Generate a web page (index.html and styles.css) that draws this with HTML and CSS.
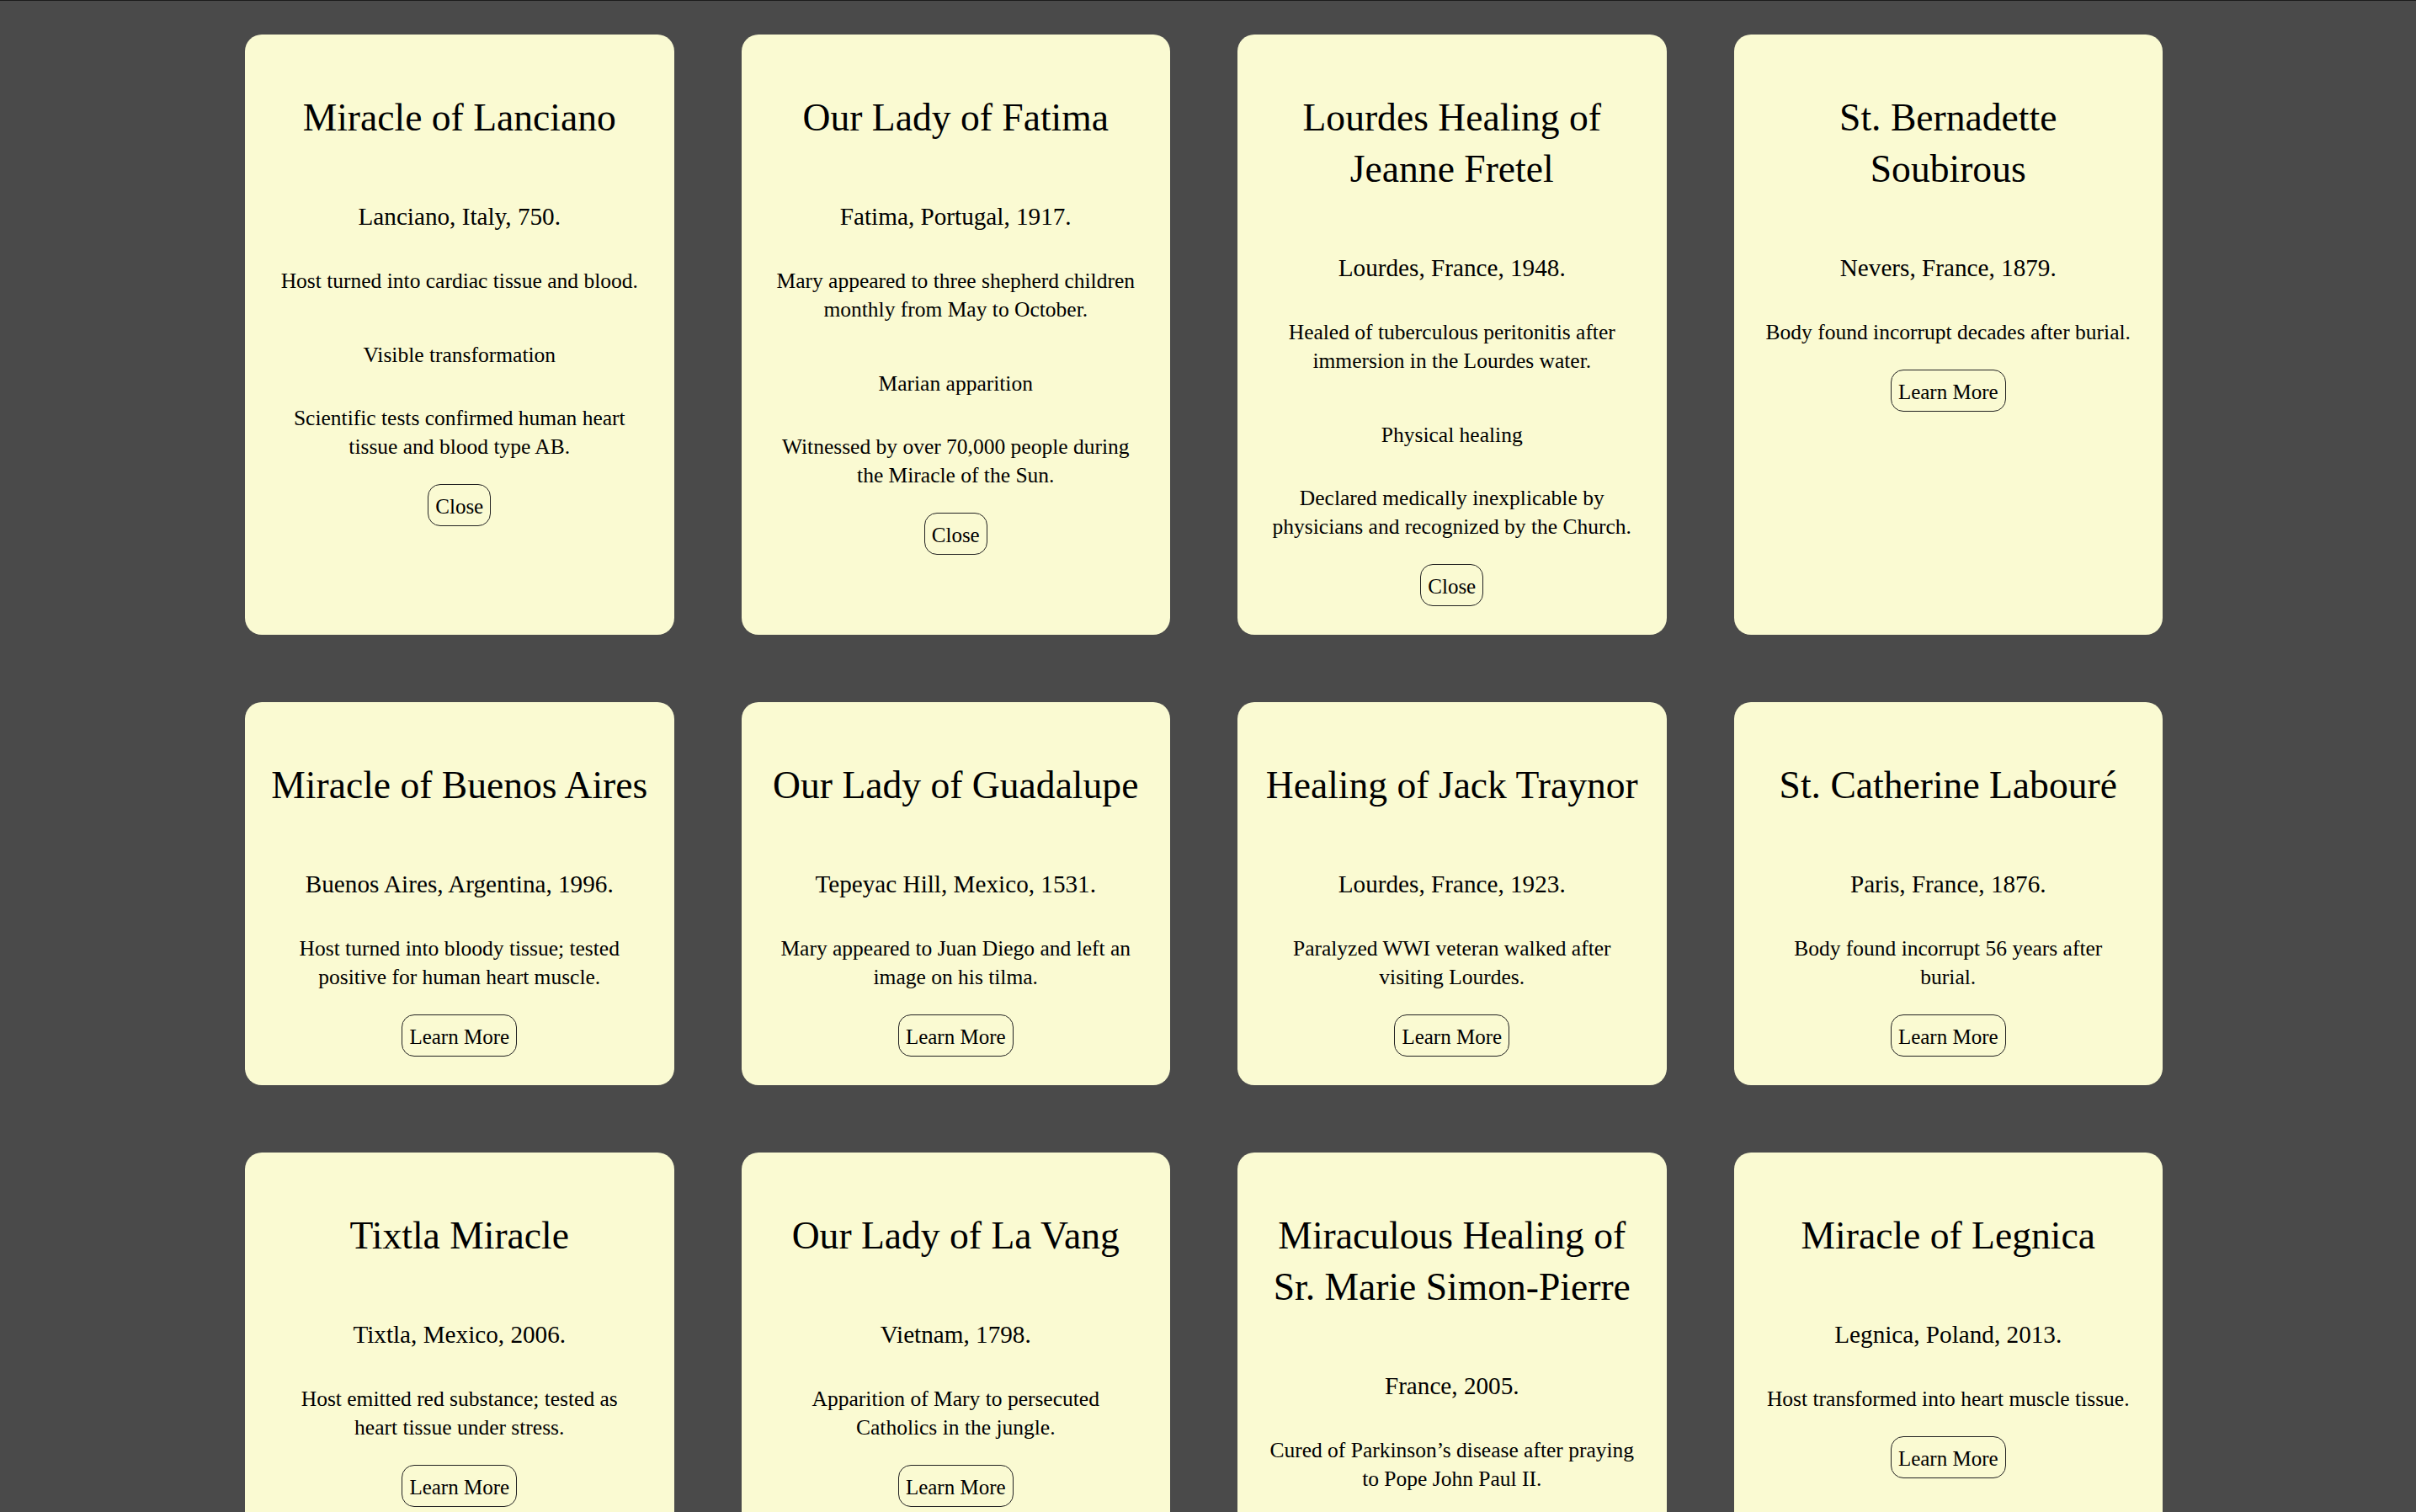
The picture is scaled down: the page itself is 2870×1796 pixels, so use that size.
FILE: index.html
```html
<!DOCTYPE html>
<html lang="en">
<head>
<meta charset="utf-8">
<title>Miracles</title>
<link rel="stylesheet" href="styles.css">
</head>
<body>
<main class="page">
  <section class="grid">
    <article class="card">
      <h2 class="title">Miracle of Lanciano</h2>
      <p class="location">Lanciano, Italy, 750.</p>
      <p class="desc">Host turned into cardiac tissue and blood.</p>
      <p class="type">Visible transformation</p>
      <p class="details">Scientific tests confirmed human heart<br>tissue and blood type AB.</p>
      <button class="btn">Close</button>
    </article>
    <article class="card">
      <h2 class="title">Our Lady of Fatima</h2>
      <p class="location">Fatima, Portugal, 1917.</p>
      <p class="desc">Mary appeared to three shepherd children<br>monthly from May to October.</p>
      <p class="type">Marian apparition</p>
      <p class="details">Witnessed by over 70,000 people during<br>the Miracle of the Sun.</p>
      <button class="btn">Close</button>
    </article>
    <article class="card">
      <h2 class="title">Lourdes Healing of<br>Jeanne Fretel</h2>
      <p class="location">Lourdes, France, 1948.</p>
      <p class="desc">Healed of tuberculous peritonitis after<br>immersion in the Lourdes water.</p>
      <p class="type">Physical healing</p>
      <p class="details">Declared medically inexplicable by<br>physicians and recognized by the Church.</p>
      <button class="btn">Close</button>
    </article>
    <article class="card">
      <h2 class="title">St. Bernadette<br>Soubirous</h2>
      <p class="location">Nevers, France, 1879.</p>
      <p class="desc">Body found incorrupt decades after burial.</p>
      <button class="btn">Learn More</button>
    </article>

    <article class="card">
      <h2 class="title">Miracle of Buenos Aires</h2>
      <p class="location">Buenos Aires, Argentina, 1996.</p>
      <p class="desc">Host turned into bloody tissue; tested<br>positive for human heart muscle.</p>
      <button class="btn">Learn More</button>
    </article>
    <article class="card">
      <h2 class="title">Our Lady of Guadalupe</h2>
      <p class="location">Tepeyac Hill, Mexico, 1531.</p>
      <p class="desc">Mary appeared to Juan Diego and left an<br>image on his tilma.</p>
      <button class="btn">Learn More</button>
    </article>
    <article class="card">
      <h2 class="title">Healing of Jack Traynor</h2>
      <p class="location">Lourdes, France, 1923.</p>
      <p class="desc">Paralyzed WWI veteran walked after<br>visiting Lourdes.</p>
      <button class="btn">Learn More</button>
    </article>
    <article class="card">
      <h2 class="title">St. Catherine Labouré</h2>
      <p class="location">Paris, France, 1876.</p>
      <p class="desc">Body found incorrupt 56 years after<br>burial.</p>
      <button class="btn">Learn More</button>
    </article>

    <article class="card">
      <h2 class="title">Tixtla Miracle</h2>
      <p class="location">Tixtla, Mexico, 2006.</p>
      <p class="desc">Host emitted red substance; tested as<br>heart tissue under stress.</p>
      <button class="btn">Learn More</button>
    </article>
    <article class="card">
      <h2 class="title">Our Lady of La Vang</h2>
      <p class="location">Vietnam, 1798.</p>
      <p class="desc">Apparition of Mary to persecuted<br>Catholics in the jungle.</p>
      <button class="btn">Learn More</button>
    </article>
    <article class="card">
      <h2 class="title">Miraculous Healing of<br>Sr. Marie Simon-Pierre</h2>
      <p class="location">France, 2005.</p>
      <p class="desc">Cured of Parkinson’s disease after praying<br>to Pope John Paul II.</p>
      <button class="btn">Learn More</button>
    </article>
    <article class="card">
      <h2 class="title">Miracle of Legnica</h2>
      <p class="location">Legnica, Poland, 2013.</p>
      <p class="desc">Host transformed into heart muscle tissue.</p>
      <button class="btn">Learn More</button>
    </article>
  </section>
</main>
</body>
</html>
```

FILE: styles.css
```css
html, body {
  margin: 0;
  padding: 0;
  background: #4a4a4a;
}

body {
  font-family: "Liberation Serif", "Times New Roman", serif;
  color: #000;
  border-top: 1px solid #1c1c1c;
}

.page {
  padding: 40px 301px 80px 291px;
}

.grid {
  display: grid;
  grid-template-columns: repeat(4, 1fr);
  column-gap: 80px;
  row-gap: 80px;
}

.card {
  background: #fafad2;
  border-radius: 20px;
  padding: 68px 20px 34px;
  display: flex;
  flex-direction: column;
  align-items: center;
  text-align: center;
}

.title {
  margin: 0;
  font-size: 45.6px;
  line-height: 61px;
  font-weight: normal;
}

.location {
  margin: 67px 0 0;
  font-size: 29.2px;
  line-height: 40px;
}

.desc,
.type,
.details {
  font-size: 25.5px;
  line-height: 34px;
}

.desc {
  margin: 40px 0 0;
}

.type {
  margin: 54px 0 0;
}

.details {
  margin: 41px 0 0;
}

.btn {
  margin-top: 27px;
  font-family: inherit;
  font-size: 25px;
  line-height: 32px;
  color: #000;
  background: transparent;
  border: 1px solid #222;
  border-radius: 15px;
  padding: 10px 8px 6px;
}
```
